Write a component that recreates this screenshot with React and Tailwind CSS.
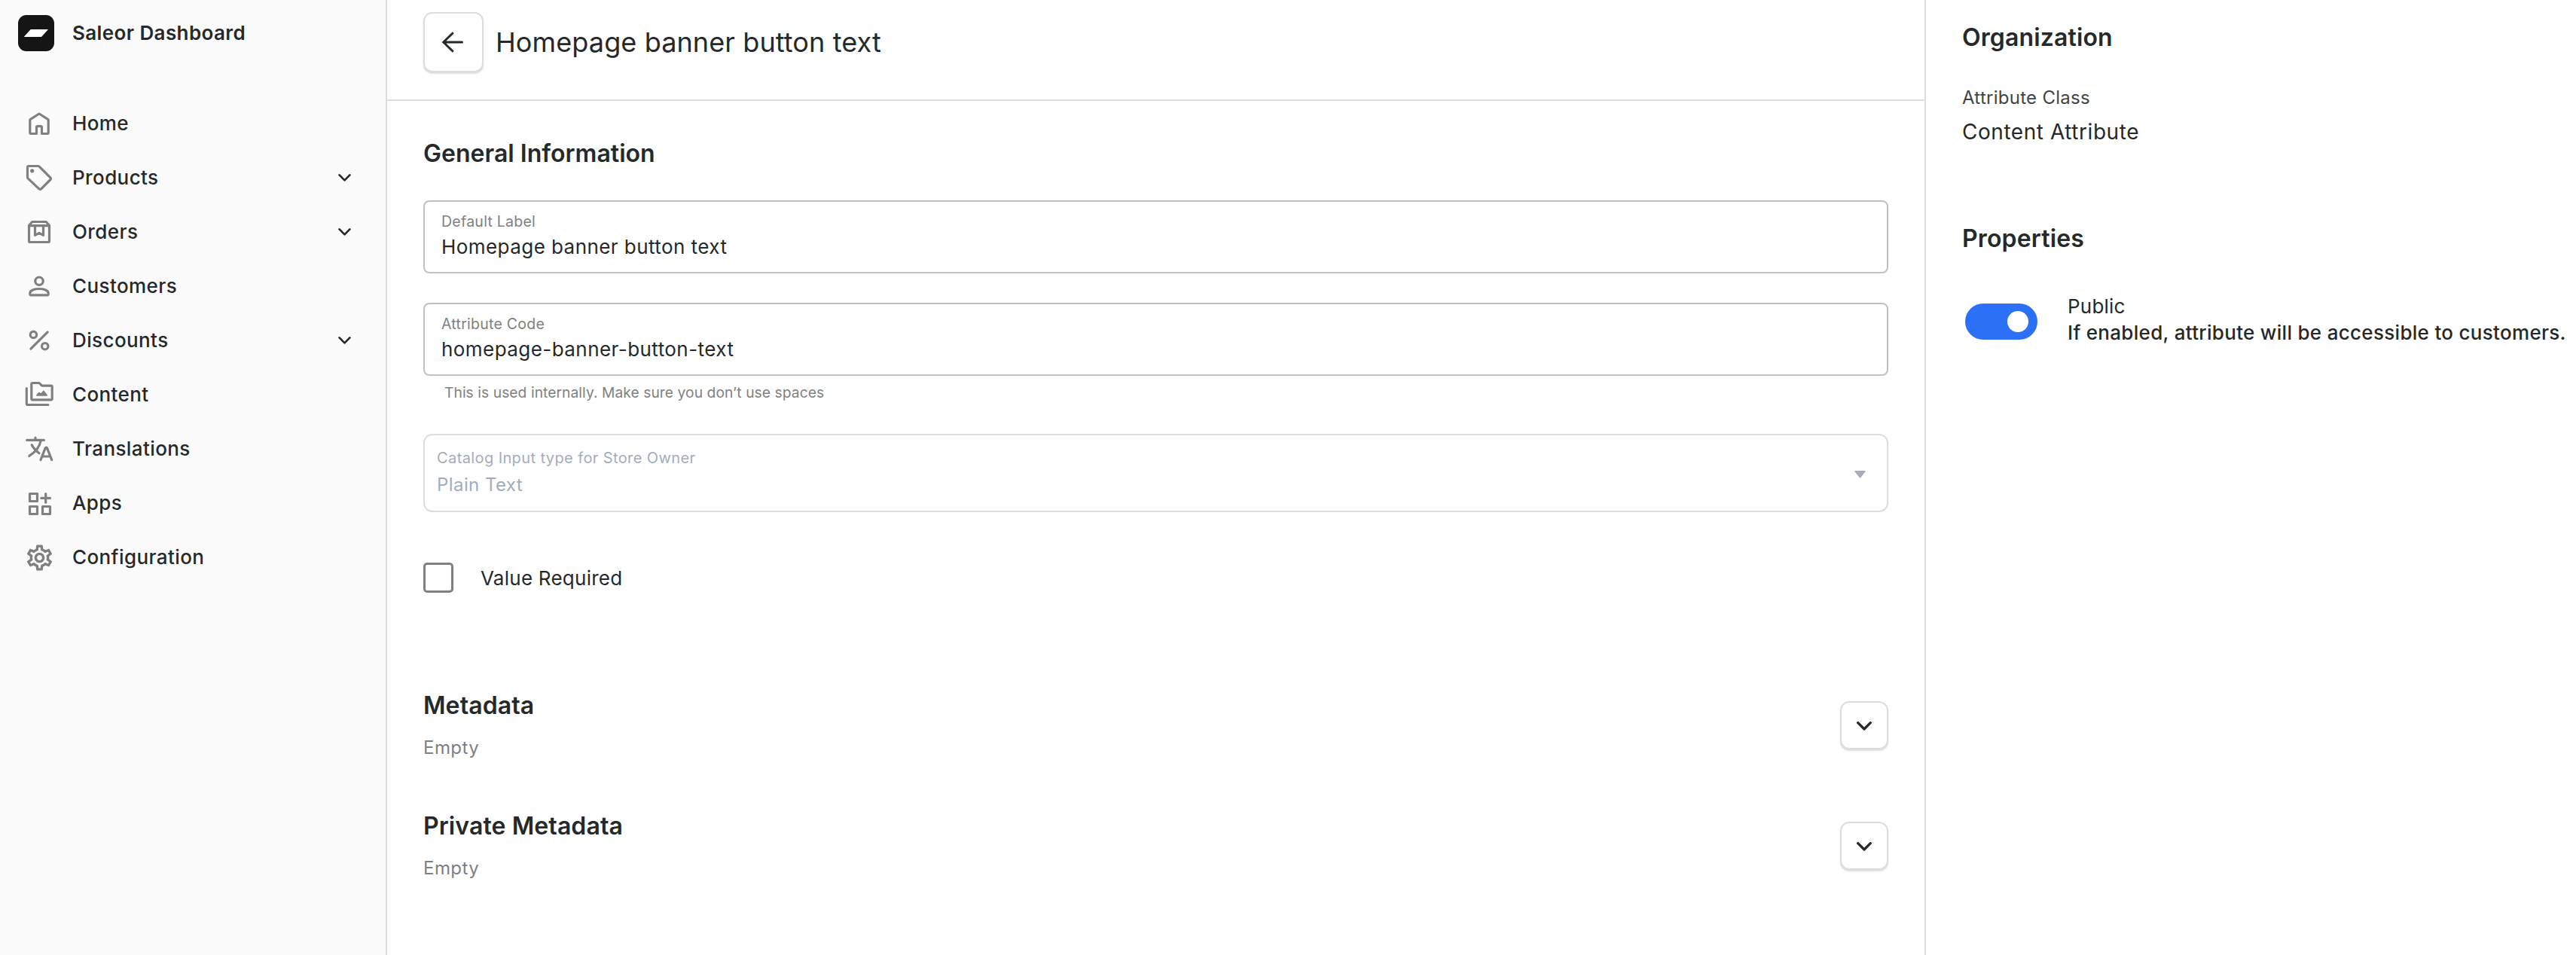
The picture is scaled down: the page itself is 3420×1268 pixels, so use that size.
import { MdOutlineSettings } from "react-icons/md";

function Glyph({ children }) {
  return (
    <svg
      viewBox="0 0 40 40"
      className="size-10 shrink-0 overflow-visible"
      fill="none"
      stroke="currentColor"
      strokeWidth="3.2"
      strokeLinecap="round"
      strokeLinejoin="round"
    >
      {children}
    </svg>
  );
}

const HomeIcon = () => (
  <Glyph>
    <path d="M7.8 15.6a1.6 1.6 0 0 1 .7-1.3L19.2 7.5a1.6 1.6 0 0 1 1.7 0l10.6 6.8a1.6 1.6 0 0 1 .7 1.3V32a1.5 1.5 0 0 1-1.5 1.5h-7.2v-8.3a1.5 1.5 0 0 0-1.5-1.5h-4a1.5 1.5 0 0 0-1.5 1.5v8.3H9.3A1.5 1.5 0 0 1 7.8 32Z" />
  </Glyph>
);

const TagIcon = () => (
  <Glyph>
    <path d="M6 4.5h12.7a2 2 0 0 1 1.4.6l14.8 14.8a1.8 1.8 0 0 1 0 2.6L22.6 34.9a1.8 1.8 0 0 1-2.6 0L5.1 20.8a2 2 0 0 1-.6-1.4V6A1.5 1.5 0 0 1 6 4.5Z" />
    <circle cx="10.7" cy="10.8" r="2.6" fill="currentColor" stroke="none" />
  </Glyph>
);

const OrdersIcon = () => (
  <Glyph>
    <path d="M6.5 11.5 10.3 7a1.5 1.5 0 0 1 1-.5h17.4a1.5 1.5 0 0 1 1 .5l3.8 4.5V32a1.5 1.5 0 0 1-1.5 1.5H8A1.5 1.5 0 0 1 6.5 32Z" />
    <path d="M6.5 11.7h27M14.5 11.7v12.6l5.5-2.9 5.5 2.9V11.7" />
  </Glyph>
);

const PersonIcon = () => (
  <Glyph>
    <circle cx="20" cy="13.2" r="5.2" />
    <path d="M7.8 29.6C7.8 25 14.6 23.5 20 23.5S32.2 25 32.2 29.6v.7a1.5 1.5 0 0 1-1.5 1.5H9.3a1.5 1.5 0 0 1-1.5-1.5Z" />
  </Glyph>
);

const PercentIcon = () => (
  <Glyph>
    <circle cx="12.4" cy="12.4" r="4.2" />
    <circle cx="27.7" cy="27.7" r="4.2" />
    <path d="M8.9 31.2 31.2 8.9" />
  </Glyph>
);

const ContentIcon = () => (
  <Glyph>
    <path d="M11.3 4.5h8.2a1.5 1.5 0 0 1 1.1.5l2.6 2.7a1.5 1.5 0 0 0 1.1.5h11.4a1.5 1.5 0 0 1 1.5 1.5v15.6a1.5 1.5 0 0 1-1.5 1.5H11.3a1.5 1.5 0 0 1-1.5-1.5V6a1.5 1.5 0 0 1 1.5-1.5Z" />
    <path d="M3.3 11.7V32a1.5 1.5 0 0 0 1.5 1.5h27.1" />
    <path d="M16.7 21 20 17.3l2.4 2 3.5-4 4.4 5.7Z" fill="currentColor" strokeWidth="1.4" />
  </Glyph>
);

const TranslateIcon = () => (
  <Glyph>
    <path d="M3.7 8.4h22.7M15 8.4V5M22.3 8.8C20.8 16.6 15.2 24.2 6.8 29.4M10.2 14.8c1.6 3.4 5.6 7.8 9.7 10.9" />
    <path d="m22 34.7 6.2-15.8a1.2 1.2 0 0 1 2.3 0l6.2 15.8M24.3 30h10" />
  </Glyph>
);

const AppsIcon = () => (
  <Glyph>
    <path d="M7.5 7.5h10v10h-10ZM7.5 24.5h10v10h-10ZM24.5 24.5h10v10h-10ZM28.7 7.5v11.7M22.8 13.4h11.7" />
  </Glyph>
);

const GearIcon = () => (
  <span className="flex size-10 shrink-0 items-center justify-center">
    <MdOutlineSettings className="size-[41px] shrink-0" />
  </span>
);

const NAV = [
  { label: "Home", Icon: HomeIcon },
  { label: "Products", Icon: TagIcon, open: true },
  { label: "Orders", Icon: OrdersIcon, open: true },
  { label: "Customers", Icon: PersonIcon },
  { label: "Discounts", Icon: PercentIcon, open: true },
  { label: "Content", Icon: ContentIcon },
  { label: "Translations", Icon: TranslateIcon },
  { label: "Apps", Icon: AppsIcon },
  { label: "Configuration", Icon: GearIcon },
];

function Chevron({ className, strokeWidth }) {
  return (
    <svg
      viewBox="0 0 20 12"
      className={className}
      fill="none"
      stroke="currentColor"
      strokeWidth={strokeWidth}
      strokeLinecap="round"
      strokeLinejoin="round"
    >
      <path d="m1.7 1.7 8.3 8.3 8.3-8.3" />
    </svg>
  );
}

function Sidebar() {
  return (
    <aside className="flex w-[514px] shrink-0 flex-col border-r-2 border-[#dadee2] bg-[#fbfbfb] pt-5">
      <div className="flex h-12 items-center gap-6 pl-6">
        <svg viewBox="0 0 48 48" className="size-12">
          <rect width="48" height="48" rx="11" fill="#151515" />
          <path d="M7.7 29 16.7 19H40l-9 10Z" fill="#fff" />
        </svg>
        <span className="text-[26px] leading-8 font-semibold tracking-[0.39px]">Saleor Dashboard</span>
      </div>
      <nav className="mt-[60px] flex flex-col">
        {NAV.map(({ label, Icon, open }) => (
          <a key={label} className="flex h-[72px] items-center pr-[46px] pl-8">
            <span className="text-[#7f8180]">
              <Icon />
            </span>
            <span className="ml-6 grow text-[26px] leading-8 font-medium tracking-[0.4px]">{label}</span>
            {open && <Chevron className="h-[10px] w-[17px]" strokeWidth="3.2" />}
          </a>
        ))}
      </nav>
    </aside>
  );
}

function Field({ label, value }) {
  return (
    <div className="flex h-[97px] flex-col rounded-lg border-2 border-[#c0c0c0] pt-[11px] pl-[22px]">
      <span className="text-[19.5px] leading-[30px] tracking-[0.26px] text-[#7f8180]">{label}</span>
      <span className="text-[26px] leading-[37px] tracking-[0.44px]">{value}</span>
    </div>
  );
}

function MetadataCard({ title }) {
  return (
    <section className="flex items-start justify-between">
      <div>
        <h2 className="text-[32px] leading-10 font-semibold tracking-[0.1px]">{title}</h2>
        <p className="mt-5 text-2xl leading-8 tracking-[0.45px] text-[#7f8180]">Empty</p>
      </div>
      <button className="mt-[14px] flex size-16 items-center justify-center rounded-xl border-2 border-[#dadee2] pt-0.5 shadow-[0_1px_0_#dadee2,0_2px_2px_rgba(0,0,0,0.12)]">
        <Chevron className="h-3 w-5" strokeWidth="3.3" />
      </button>
    </section>
  );
}

export default function App() {
  return (
    <div className="flex h-[1268px] w-[3420px] overflow-hidden bg-white font-['Inter',sans-serif] text-[#252929]">
      <Sidebar />

      <main className="flex w-[2043px] shrink-0 flex-col border-r-2 border-[#dadee2]">
        <header className="flex h-[134px] items-start gap-4 border-b-2 border-[#dadee2] pt-4 pl-12">
          <button className="flex size-20 items-center justify-center rounded-xl border-2 border-[#dadee2] pr-0.5 shadow-[0_1px_0_#dadee2,0_2px_2px_rgba(0,0,0,0.12)]">
            <svg viewBox="0 0 28 28" className="size-7" fill="none" stroke="currentColor" strokeWidth="3" strokeLinecap="round" strokeLinejoin="round">
              <path d="M26.5 14h-25M13.8 2.2 1.7 14l12.1 11.8" />
            </svg>
          </button>
          <h1 className="text-4xl leading-[80px] tracking-[0.11px]">Homepage banner button text</h1>
        </header>

        <div className="flex flex-col px-12 pt-[50px]">
          <h2 className="text-[32px] leading-10 font-semibold tracking-[0.03px]">General Information</h2>

          <div className="mt-[42px] flex flex-col gap-[39px]">
            <Field label="Default Label" value="Homepage banner button text" />
            <Field label="Attribute Code" value="homepage-banner-button-text" />
          </div>
          <p className="mt-2 pl-7 text-[19.2px] leading-7 tracking-[0.08px] text-[#7f8180]">
            This is used internally. Make sure you don’t use spaces
          </p>

          <div className="mt-[41px] flex h-[104px] items-start justify-between rounded-xl border-2 border-[#dadee2] pt-[15px] pr-7 pl-4 text-[#a3adbd]">
            <div className="flex flex-col">
              <span className="text-xl leading-[30px] tracking-[0.4px]">Catalog Input type for Store Owner</span>
              <span className="text-2xl leading-[42px] tracking-[0.42px]">Plain Text</span>
            </div>
            <svg viewBox="0 0 15 10" className="mt-8 h-2.5 w-[15px]" fill="currentColor">
              <path d="M1 0h13q1.2.2.5 1.2L8.2 9.3q-.7.7-1.4 0L.5 1.2Q-.2.2 1 0Z" />
            </svg>
          </div>

          <label className="mt-[67px] flex h-10 items-center gap-9">
            <span className="size-10 rounded-[5px] border-[3px] border-[#7f8180]" />
            <span className="pt-0.5 text-[26px] leading-10 tracking-[0.25px]">Value Required</span>
          </label>

          <div className="mt-[130px] flex flex-col gap-[68px]">
            <MetadataCard title="Metadata" />
            <MetadataCard title="Private Metadata" />
          </div>
        </div>
      </main>

      <aside className="flex grow flex-col pt-[30px] pl-12 whitespace-nowrap">
        <h2 className="text-[32px] leading-10 font-semibold tracking-[0.13px]">Organization</h2>
        <p className="mt-11 text-2xl leading-8 tracking-[0.27px] text-[#404444]">Attribute Class</p>
        <p className="mt-[11px] text-[28px] leading-9 tracking-[0.55px]">Content Attribute</p>

        <h2 className="mt-[104px] text-[32px] leading-10 font-semibold tracking-[0.15px]">Properties</h2>
        <div className="mt-[52px] flex items-start">
          <span className="mt-[14px] ml-1 flex h-12 w-24 items-center justify-end rounded-full bg-[#2b70f7] pr-3">
            <span className="size-7 rounded-full bg-white" />
          </span>
          <div className="ml-10 text-[26px] leading-[35px]">
            <p className="tracking-[0.2px]">Public</p>
            <p className="font-medium tracking-[0.3px]">If enabled, attribute will be accessible to customers.</p>
          </div>
        </div>
      </aside>
    </div>
  );
}
